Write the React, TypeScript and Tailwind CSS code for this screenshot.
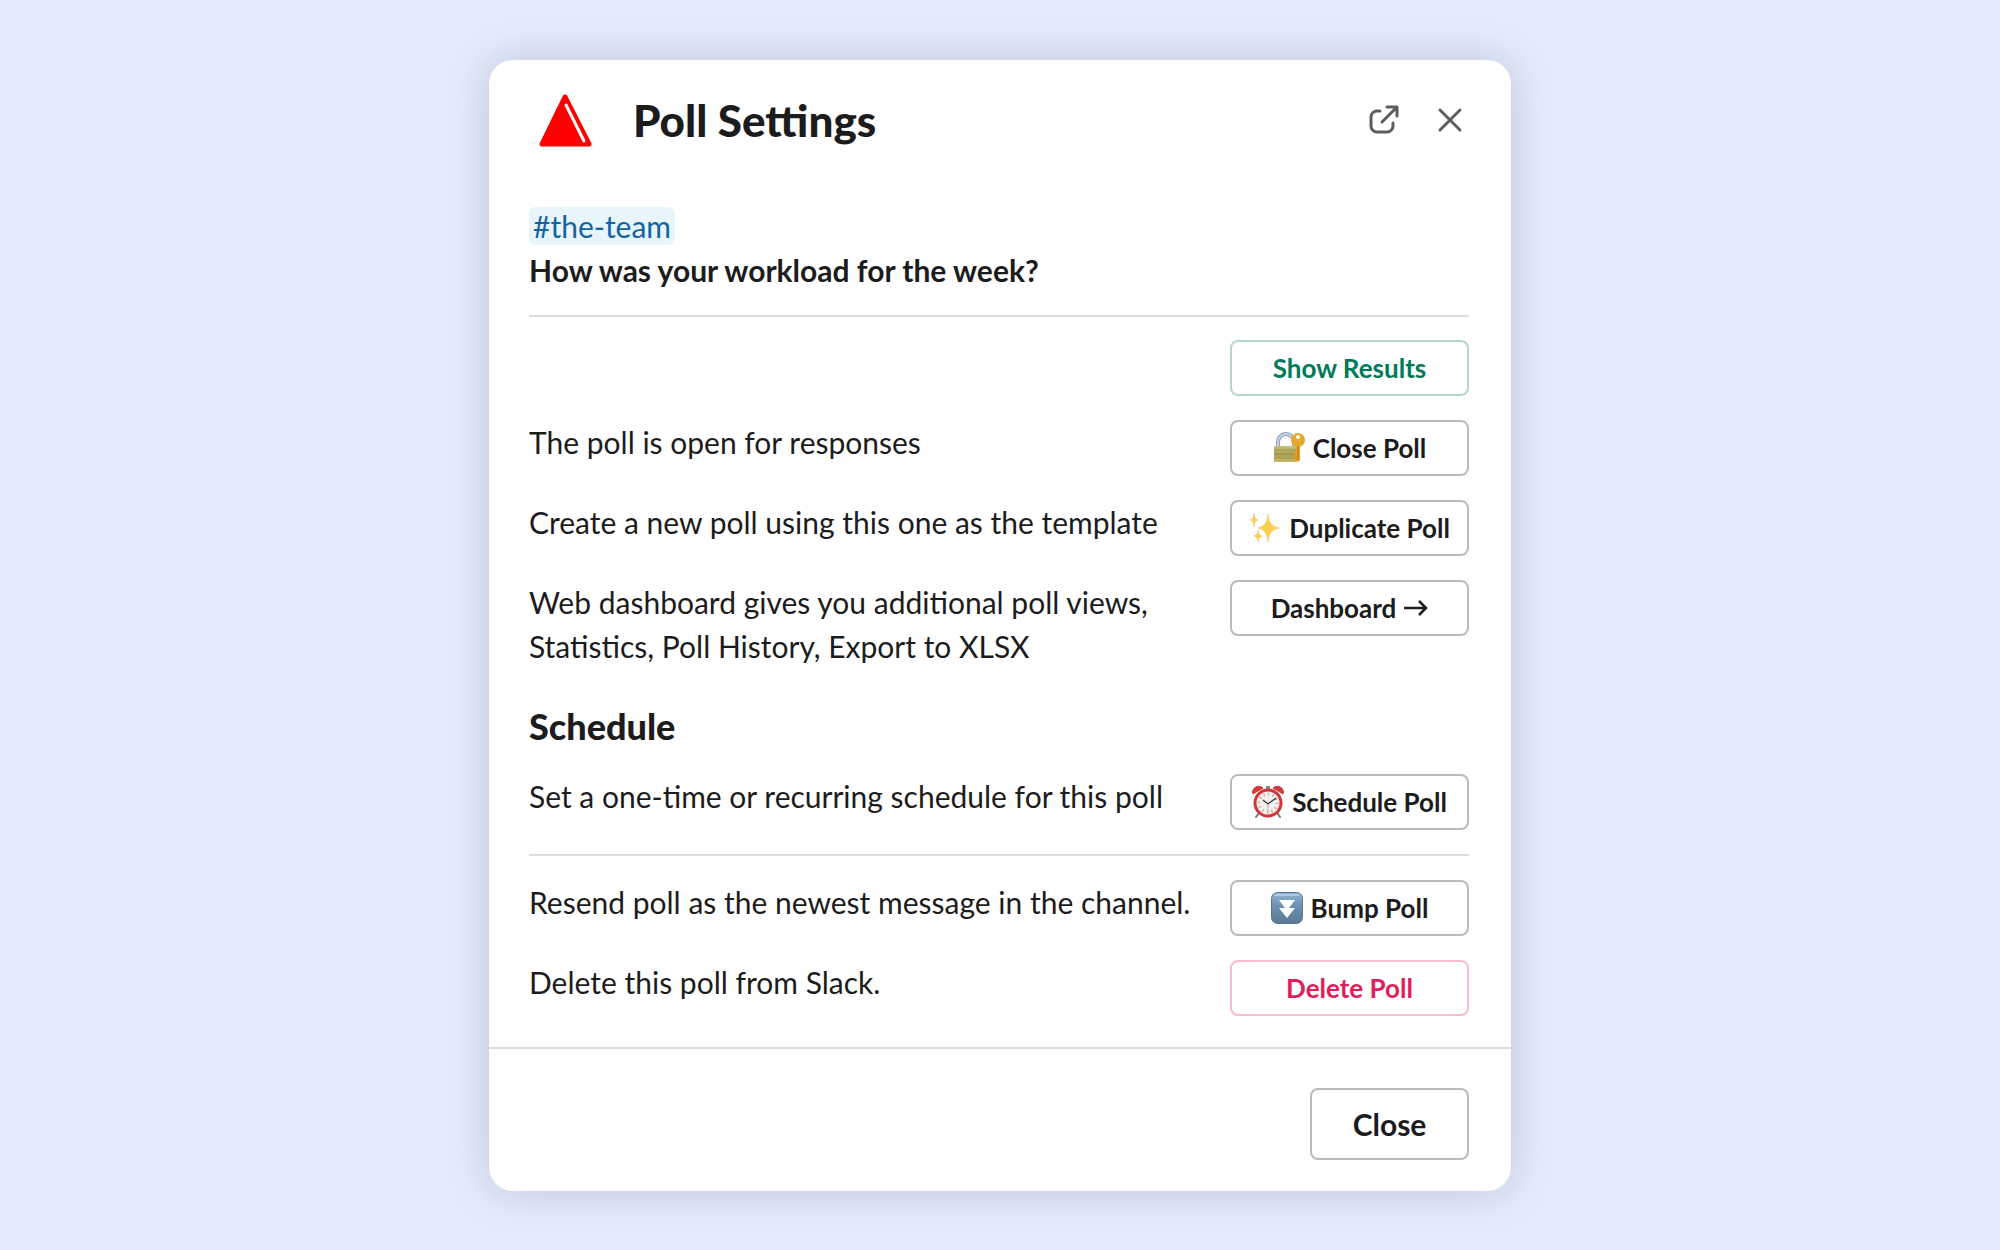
import type { ReactNode } from "react";

type Tone = "default" | "primary" | "danger";

const tones: Record<Tone, string> = {
  default: "border-[#bbbbbb] text-[#1d1c1d]",
  primary: "border-[#b0d8cc] text-[#007a5a]",
  danger: "border-[#f8bccf] text-[#e01e5a]",
};

export default function App() {
  return (
    <main className="flex min-h-screen items-center justify-center bg-[#e4ebfc] font-['Lato','Liberation_Sans',sans-serif] text-[30px] leading-[44px] text-[#1d1c1d]">
      <section
        role="dialog"
        aria-labelledby="poll-title"
        className="w-full max-w-[1022px] rounded-3xl bg-white shadow-[0_0_40px_rgba(20,20,40,0.18)]"
      >
        <header className="flex items-center px-10 pt-[30px]">
          <PollLogo />
          <h1 id="poll-title" className="ml-8 grow text-[44px] leading-[60px] font-black">
            Poll Settings
          </h1>
          <div className="flex gap-8 pr-1">
            <button type="button" aria-label="Open in new window" className="text-[#5e5d5e]">
              <PopOutIcon />
            </button>
            <button type="button" aria-label="Dismiss" className="text-[#5e5d5e]">
              <CrossIcon />
            </button>
          </div>
        </header>

        <div className="pt-[54px] pr-[42px] pb-[31px] pl-10">
          <div>
            <a href="#the-team" className="rounded-md bg-[#e8f5fb] px-1 py-px text-[#1264a3]">
              #the-team
            </a>
          </div>
          <h2 className="font-bold">How was your workload for the week?</h2>

          <hr className="my-[23px] border-t-2 border-[#dddddd]" />

          <div className="space-y-6">
            <SettingRow>
              <ActionButton tone="primary">Show Results</ActionButton>
            </SettingRow>
            <SettingRow text="The poll is open for responses">
              <ActionButton icon={<LockIcon />}>Close Poll</ActionButton>
            </SettingRow>
            <SettingRow text="Create a new poll using this one as the template">
              <ActionButton icon={<SparklesIcon />}>Duplicate Poll</ActionButton>
            </SettingRow>
            <SettingRow text="Web dashboard gives you additional poll views, Statistics, Poll History, Export to XLSX">
              <ActionButton>
                Dashboard <ArrowIcon />
              </ActionButton>
            </SettingRow>
          </div>

          <h2 className="mt-[34px] mb-6 text-[36px] leading-[48px] font-black">Schedule</h2>

          <SettingRow text="Set a one-time or recurring schedule for this poll">
            <ActionButton icon={<ClockIcon />}>Schedule Poll</ActionButton>
          </SettingRow>

          <hr className="my-6 border-t-2 border-[#dddddd]" />

          <div className="space-y-6">
            <SettingRow text="Resend poll as the newest message in the channel.">
              <ActionButton icon={<BumpIcon />}>Bump Poll</ActionButton>
            </SettingRow>
            <SettingRow text="Delete this poll from Slack.">
              <ActionButton tone="danger">Delete Poll</ActionButton>
            </SettingRow>
          </div>
        </div>

        <footer className="flex justify-end border-t-2 border-[#dddddd] pt-[39px] pr-[42px] pb-[31px]">
          <button
            type="button"
            className="h-[72px] w-[159px] rounded-lg border-2 border-[#bbbbbb] font-bold"
          >
            Close
          </button>
        </footer>
      </section>
    </main>
  );
}

function SettingRow({ text, children }: { text?: string; children: ReactNode }) {
  return (
    <div className="flex items-start justify-between">
      <p className="max-w-[670px]">{text}</p>
      {children}
    </div>
  );
}

function ActionButton({
  icon,
  tone = "default",
  children,
}: {
  icon?: ReactNode;
  tone?: Tone;
  children: ReactNode;
}) {
  return (
    <button
      type="button"
      className={`flex h-14 w-[239px] shrink-0 items-center justify-center gap-2 rounded-lg border-2 text-[26px] leading-8 font-bold ${tones[tone]}`}
    >
      {icon}
      {children}
    </button>
  );
}

function PollLogo() {
  return (
    <svg viewBox="0 0 72 60" className="h-[60px] w-[72px]" aria-hidden="true">
      <path d="M36 7 L60 54 H13 Z" fill="#ff0000" stroke="#ff0000" strokeWidth="5" strokeLinejoin="round" />
      <path d="M37 15 L55 51" stroke="#fff" strokeWidth="3" strokeLinecap="round" />
    </svg>
  );
}

function PopOutIcon() {
  return (
    <svg viewBox="0 0 34 34" className="size-[34px]" fill="none" stroke="currentColor" strokeWidth="3" strokeLinecap="round" strokeLinejoin="round" aria-hidden="true">
      <path d="M13 8 H10 a6 6 0 0 0 -6 6 V23 a6 6 0 0 0 6 6 H20 a6 6 0 0 0 6 -6 V20" />
      <path d="M20 4 H30 V13 M30 4 L15 19" />
    </svg>
  );
}

function CrossIcon() {
  return (
    <svg viewBox="0 0 34 34" className="size-[34px]" fill="none" stroke="currentColor" strokeWidth="3" strokeLinecap="round" aria-hidden="true">
      <path d="M7 7 L27 27 M27 7 L7 27" />
    </svg>
  );
}

function ArrowIcon() {
  return (
    <svg viewBox="0 0 24 18" className="h-[18px] w-6" fill="none" stroke="currentColor" strokeWidth="2.5" aria-hidden="true">
      <path d="M0 9 H22 M15 2 L22 9 L15 16" />
    </svg>
  );
}

function LockIcon() {
  return (
    <svg viewBox="0 0 32 32" className="size-8" aria-hidden="true">
      <defs>
        <linearGradient id="lock-body" x1="0" y1="0" x2="0" y2="1">
          <stop offset="0" stopColor="#c9c179" />
          <stop offset="0.5" stopColor="#aaa052" />
          <stop offset="1" stopColor="#c4b968" />
        </linearGradient>
      </defs>
      <path d="M5 15 V10 a8 8 0 0 1 16 0 V15" fill="none" stroke="#8f9bb0" strokeWidth="4" />
      <path d="M5 15 V10 a8 8 0 0 1 16 0 V15" fill="none" stroke="#c7d6ee" strokeWidth="2" />
      <rect x="1" y="14" width="23" height="16" rx="1" fill="url(#lock-body)" />
      <path d="M1 18 H24 M1 22 H24 M1 26 H24" stroke="#8d8440" strokeOpacity="0.5" />
      <path d="M23 11 H27 V28 L25 30 L22 28 V26 L20 25 L22 23 L20 21 L23 19 Z" fill="#e0a126" />
      <circle cx="25" cy="8" r="7" fill="#e5a92c" />
      <circle cx="25" cy="5" r="2" fill="#fff" />
      <path d="M25 14 V28" stroke="#b97a14" />
    </svg>
  );
}

function SparklesIcon() {
  return (
    <svg viewBox="0 0 32 32" className="size-8" aria-hidden="true">
      <g fill="#fdd04a" stroke="#f7bd7a" strokeWidth="0.6">
        <path d="M19 2 C20 11 22 14 30 16 C22 18 20 21 19 30 C18 21 16 18 9 16 C16 14 18 11 19 2 Z" />
        <path d="M5 1 C5.5 6 6.5 7 9 8 C6.5 9 5.5 10 5 15 C4.5 10 3.5 9 1 8 C3.5 7 4.5 6 5 1 Z" />
        <path d="M9 18 C9.5 22 10.5 23 13 24 C10.5 25 9.5 26 9 30 C8.5 26 7.5 25 5 24 C7.5 23 8.5 22 9 18 Z" />
      </g>
    </svg>
  );
}

function ClockIcon() {
  return (
    <svg viewBox="0 0 32 32" className="size-8" aria-hidden="true">
      <path d="M7 27 L4 31 M25 27 L28 31" stroke="#777" strokeWidth="2" strokeLinecap="round" />
      <path d="M1 8 a6 6 0 0 1 10 -6 Z M31 8 a6 6 0 0 0 -10 -6 Z" fill="#d4393c" stroke="#d4393c" strokeLinejoin="round" />
      <rect x="14" y="0" width="4" height="4" fill="#8a8a8a" />
      <circle cx="16" cy="17" r="13" fill="#f2f0ee" stroke="#cf3539" strokeWidth="3" />
      <circle cx="16" cy="17" r="9" fill="none" stroke="#e58b88" strokeWidth="3" strokeDasharray="1 3.71" />
      <path d="M11 14 L16 18 L24 12" fill="none" stroke="#333" strokeWidth="1.2" />
      <path d="M16 18 V26" stroke="#aaa" strokeWidth="0.8" />
    </svg>
  );
}

function BumpIcon() {
  return (
    <svg viewBox="0 0 32 32" className="size-8" aria-hidden="true">
      <defs>
        <linearGradient id="bump-face" x1="0" y1="0" x2="0" y2="1">
          <stop offset="0" stopColor="#8fb2d3" />
          <stop offset="0.45" stopColor="#6c90b3" />
          <stop offset="1" stopColor="#5b7892" />
        </linearGradient>
      </defs>
      <rect x="0.5" y="0.5" width="31" height="31" rx="6" fill="url(#bump-face)" stroke="#5a7690" />
      <path d="M4 3 H28" stroke="#b9d2ea" strokeWidth="1.5" strokeLinecap="round" />
      <path d="M8 8 H24 L18 16 H24 L16 26 L8 16 H14 Z" fill="#fff" />
    </svg>
  );
}
